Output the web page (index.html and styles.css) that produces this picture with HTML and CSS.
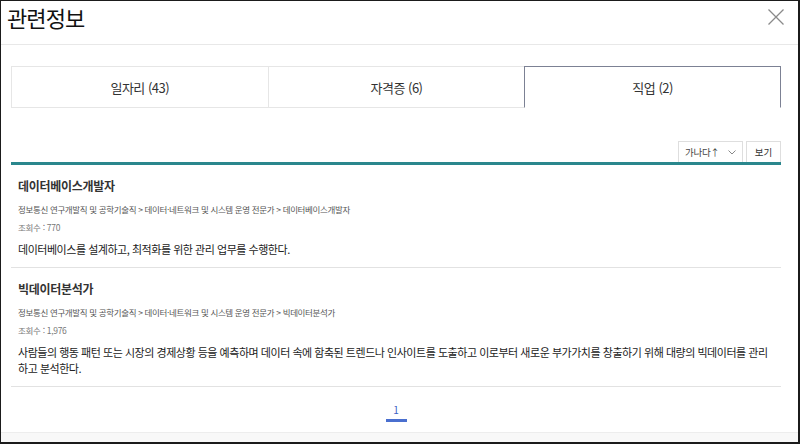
FILE: index.html
```html
<!DOCTYPE html>
<html lang="ko">
<head>
<meta charset="utf-8">
<title>관련정보</title>
<link rel="stylesheet" href="styles.css">
</head>
<body>
<div class="frame">
  <header class="head">
    <h1 class="title">관련정보</h1>
    <button class="close" aria-label="닫기">
      <svg width="16" height="16" viewBox="0 0 16 16"><path d="M0.5 0.5L15.5 15.5M15.5 0.5L0.5 15.5" stroke="#8a8a8a" stroke-width="1.3" fill="none"/></svg>
    </button>
  </header>
  <main class="content">
    <nav class="tabs">
      <a class="tab">일자리 (43)</a>
      <a class="tab">자격증 (6)</a>
      <a class="tab on">직업 (2)</a>
    </nav>
    <div class="toolbar">
      <div class="sort"><span>가나다↑</span><svg width="8" height="5" viewBox="0 0 8 5"><path d="M0.5 0.5L4 4L7.5 0.5" stroke="#888" stroke-width="1" fill="none"/></svg></div>
      <button class="view">보기</button>
    </div>
    <ul class="list">
      <li class="item">
        <h2 class="job">데이터베이스개발자</h2>
        <p class="path">정보통신 연구개발직 및 공학기술직 &gt; 데이터·네트워크 및 시스템 운영 전문가 &gt; 데이터베이스개발자</p>
        <p class="views">조회수 : 770</p>
        <p class="desc">데이터베이스를 설계하고, 최적화를 위한 관리 업무를 수행한다.</p>
      </li>
      <li class="item">
        <h2 class="job">빅데이터분석가</h2>
        <p class="path">정보통신 연구개발직 및 공학기술직 &gt; 데이터·네트워크 및 시스템 운영 전문가 &gt; 빅데이터분석가</p>
        <p class="views">조회수 : 1,976</p>
        <p class="desc">사람들의 행동 패턴 또는 시장의 경제상황 등을 예측하며 데이터 속에 함축된 트렌드나 인사이트를 도출하고 이로부터 새로운 부가가치를 창출하기 위해 대량의 빅데이터를 관리하고 분석한다.</p>
      </li>
    </ul>
    <div class="pager"><a class="page on">1</a></div>
  </main>
  <div class="foot"></div>
</div>
</body>
</html>
```
FILE: styles.css
```css
html, body {
  margin: 0;
  padding: 0;
  background: #fff;
}
body {
  font-family: "Noto Sans CJK KR", "Noto Sans", sans-serif;
  color: #222;
}
.frame {
  width: 800px;
  height: 444px;
  box-sizing: border-box;
  border-style: solid;
  border-color: #1b1b1b;
  border-width: 1px 2px 2px 1px;
  display: flex;
  flex-direction: column;
  overflow: hidden;
  background: #fff;
}
.head {
  height: 43px;
  border-bottom: 1px solid #e8e8e8;
  display: flex;
  justify-content: space-between;
  align-items: flex-start;
  padding: 0 14px 0 6px;
  flex: none;
}
.title {
  margin: 1px 0 0;
  font-size: 22px;
  line-height: 30px;
  font-weight: 400;
  letter-spacing: -0.9px;
  color: #111;
}
.close {
  margin-top: 8px;
  width: 16px;
  height: 16px;
  padding: 0;
  border: 0;
  background: none;
  display: block;
}
.close svg { display: block; }
.content {
  padding: 0 17px 0 10px;
  flex: none;
}
.tabs {
  display: grid;
  grid-template-columns: repeat(3, 1fr);
  margin-top: 21px;
  height: 42px;
}
.tab {
  display: flex;
  align-items: center;
  justify-content: center;
  border: 1px solid #e6e6e6;
  border-right: 0;
  font-size: 13px;
  letter-spacing: -0.5px;
  color: #333;
}
.tab:last-child { border-right: 1px solid #e6e6e6; }
.tab.on {
  border: 1px solid #7c8194;
  border-bottom-color: #fff;
}
.toolbar {
  display: flex;
  justify-content: flex-end;
  gap: 3px;
  margin-top: 33px;
  height: 21px;
}
.sort {
  width: 65px;
  box-sizing: border-box;
  border: 1px solid #dedede;
  border-bottom: 0;
  display: flex;
  align-items: center;
  justify-content: space-between;
  padding: 0 6px 0 6px;
  font-size: 9.5px;
  color: #444;
  letter-spacing: -0.3px;
}
.sort svg { display: block; }
.view {
  width: 35px;
  box-sizing: border-box;
  border: 1px solid #dedede;
  border-bottom: 0;
  background: #fff;
  padding: 0;
  font-family: inherit;
  font-size: 9.5px;
  color: #333;
}
.list {
  list-style: none;
  margin: 0;
  padding: 0;
  border-top: 3px solid #2a878d;
}
.item {
  padding: 12px 7px 10px;
  border-bottom: 1px solid #e2e2e2;
}
.job {
  margin: 0;
  font-size: 12px;
  line-height: 17px;
  font-weight: 700;
  letter-spacing: -0.3px;
  color: #333;
}
.path {
  margin: 9px 0 0;
  font-size: 8.5px;
  line-height: 12px;
  letter-spacing: -0.35px;
  color: #555;
}
.views {
  margin: 6px 0 0;
  font-size: 8.5px;
  line-height: 12px;
  letter-spacing: -0.3px;
  color: #777;
}
.desc {
  margin: 8px 0 0;
  font-size: 11px;
  line-height: 16px;
  letter-spacing: -0.47px;
  color: #222;
}
.pager {
  padding: 16px 0 10px;
  display: flex;
  justify-content: center;
  font-size: 10px;
  line-height: 14px;
}
.page {
  display: block;
  width: 21px;
  text-align: center;
  font-size: 10px;
  line-height: 14px;
  padding-bottom: 2px;
  border-bottom: 3px solid #4a6fcf;
  color: #3d5fc4;
}
.foot {
  flex: 1;
  border-top: 1px solid #ededed;
  background: #f8f8f8;
}
```
